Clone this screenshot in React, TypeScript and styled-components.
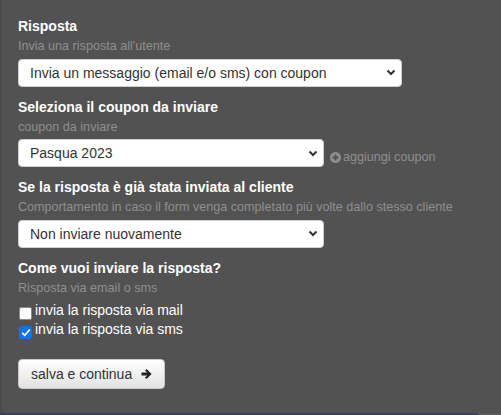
import React from "react";
import styled, { createGlobalStyle } from "styled-components";

const Global = createGlobalStyle`
  html, body { margin: 0; padding: 0; background: #3f4150; }
  body { font-family: "Liberation Sans", Arial, sans-serif; width: 501px; height: 415px; overflow: hidden; }
`;

const Backdrop = styled.div`
  width: 501px;
  height: 415px;
  background: linear-gradient(to right, #3e4060 0, #3e4060 478px, #5a5a5a 478px);
  padding: 0 0 2px 0;
  box-sizing: border-box;
  display: flex;
`;

const Edge = styled.div`
  width: 2px;
  background: #4b4b4b;
`;

const Panel = styled.div`
  flex: 1;
  background: #525252;
  border-bottom-left-radius: 4px;
  padding: 17px 0 0 16px;
  display: flex;
  flex-direction: column;
`;

const Field = styled.div`
  display: flex;
  flex-direction: column;
  margin-bottom: 11px;
`;

const Title = styled.div`
  color: #ffffff;
  font-weight: bold;
  font-size: 14px;
  line-height: 18px;
`;

const Help = styled.div`
  color: #8f8f8f;
  font-size: 12.6px;
  line-height: 17px;
  margin-top: 3px;
  margin-bottom: 3.5px;
  white-space: nowrap;
`;

const Row = styled.div`
  display: flex;
  align-items: flex-start;
`;

const SelectBox = styled.div<{ $w: number }>`
  width: ${(p) => p.$w}px;
  height: 28px;
  box-sizing: border-box;
  background: #fff;
  border: 1px solid #cfcfcf;
  border-radius: 4px;
  display: flex;
  align-items: center;
  padding: 0 5px 0 11px;
  font-size: 14px;
  color: #333;
`;

const SelectText = styled.span`
  flex: 1;
`;

const AddLink = styled.span`
  display: inline-flex;
  align-items: center;
  gap: 2px;
  margin-left: 6px;
  margin-top: 10px;
  color: #8f8f8f;
  font-size: 12.6px;
  line-height: 17px;
`;

const Checks = styled.div`
  display: flex;
  flex-direction: column;
  margin-top: 1px;
`;

const CheckRow = styled.label`
  display: flex;
  align-items: flex-start;
  gap: 3px;
  color: #fff;
  font-size: 14px;
  line-height: 19px;
`;

const Box = styled.span<{ $on?: boolean }>`
  width: 13px;
  height: 13px;
  box-sizing: border-box;
  border-radius: 2px;
  margin-top: 6px;
  margin-left: 1px;
  background: ${(p) => (p.$on ? "#0b72f0" : "#fff")};
  border: 1px solid ${(p) => (p.$on ? "#0b72f0" : "#8a8a8a")};
  display: flex;
  align-items: center;
  justify-content: center;
`;

const Button = styled.button`
  margin-top: 9px;
  align-self: flex-start;
  width: 147px;
  height: 30px;
  box-sizing: border-box;
  border: 1px solid #c8c8c8;
  border-radius: 4px;
  background: linear-gradient(#ffffff, #e2e2e2);
  font-family: "Liberation Sans", Arial, sans-serif;
  font-size: 14px;
  color: #333;
  display: flex;
  align-items: center;
  gap: 9px;
  padding: 0 0 0 12px;
`;

const Chevron = () => (
  <svg width="10" height="7" viewBox="0 0 10 7">
    <path d="M1.5 1.5 L5 5 L8.5 1.5" fill="none" stroke="#333" strokeWidth="2" />
  </svg>
);

const Select = ({ w, text }: { w: number; text: string }) => (
  <SelectBox $w={w}>
    <SelectText>{text}</SelectText>
    <Chevron />
  </SelectBox>
);

export default function App() {
  return (
    <>
      <Global />
      <Backdrop>
        <Edge />
        <Panel>
          <Field>
            <Title>Risposta</Title>
            <Help>Invia una risposta all'utente</Help>
            <Select w={384} text="Invia un messaggio (email e/o sms) con coupon" />
          </Field>
          <Field>
            <Title>Seleziona il coupon da inviare</Title>
            <Help>coupon da inviare</Help>
            <Row>
              <Select w={306} text="Pasqua 2023" />
              <AddLink>
                <svg width="11" height="11" viewBox="0 0 12 12">
                  <circle cx="6" cy="6" r="6" fill="#8f8f8f" />
                  <path d="M6 2.8 V9.2 M2.8 6 H9.2" stroke="#525252" strokeWidth="2" />
                </svg>
                aggiungi coupon
              </AddLink>
            </Row>
          </Field>
          <Field>
            <Title>Se la risposta è già stata inviata al cliente</Title>
            <Help>Comportamento in caso il form venga completato più volte dallo stesso cliente</Help>
            <Select w={306} text="Non inviare nuovamente" />
          </Field>
          <Field>
            <Title>Come vuoi inviare la risposta?</Title>
            <Help>Risposta via email o sms</Help>
            <Checks>
              <CheckRow>
                <Box />
                invia la risposta via mail
              </CheckRow>
              <CheckRow>
                <Box $on>
                  <svg width="10" height="9" viewBox="0 0 10 9">
                    <path d="M1.2 4.8 L3.8 7.3 L8.8 1.5" fill="none" stroke="#fff" strokeWidth="1.8" />
                  </svg>
                </Box>
                invia la risposta via sms
              </CheckRow>
            </Checks>
          </Field>
          <Button>
            salva e continua
            <svg width="12" height="12" viewBox="0 0 12 12">
              <path d="M0.5 4.6 H6.2 L4 2.4 L5.5 0.9 L10.6 6 L5.5 11.1 L4 9.6 L6.2 7.4 H0.5 Z" fill="#222" />
            </svg>
          </Button>
        </Panel>
      </Backdrop>
    </>
  );
}
